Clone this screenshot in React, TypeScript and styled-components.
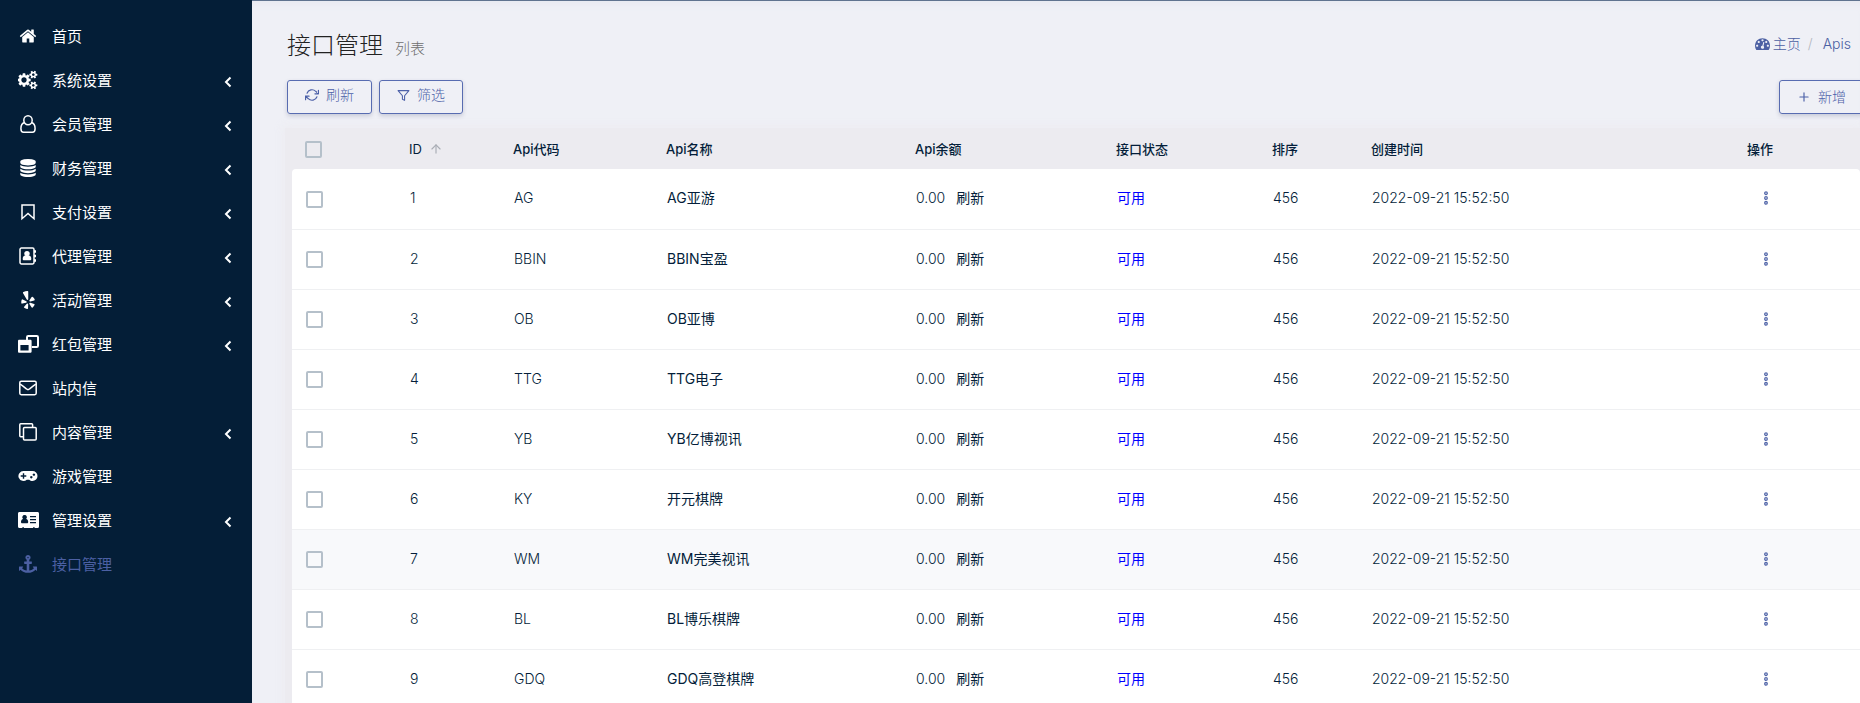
import React from "react";
import styled, { createGlobalStyle, css } from "styled-components";
import { FaYelp } from "react-icons/fa";
import { FiArrowUp, FiFilter, FiPlus } from "react-icons/fi";

const GlobalStyle = createGlobalStyle`
  *, *::before, *::after { box-sizing: border-box; }
  body {
    margin: 0;
    background: #eff0f6;
    color: #041e3a;
    font-family: Inter, "Noto Sans CJK SC", sans-serif;
    font-size: 14px;
    font-weight: 300;
    line-height: 20px;
  }
  a { color: inherit; text-decoration: none; }
  button { font: inherit; color: inherit; cursor: pointer; }
`;

const Shell = styled.div`
  display: flex;
  height: 100vh;
  overflow: hidden;
`;

const Sidebar = styled.nav`
  flex: none;
  width: 252px;
  padding-top: 14px;
  background: #041e37;
`;

const Menu = styled.ul`
  margin: 0;
  padding: 0;
  list-style: none;
`;

const MenuLink = styled.a<{ $active?: boolean }>`
  display: flex;
  align-items: center;
  height: 44px;
  padding: 0 20px 0 16px;
  color: ${(p) => (p.$active ? "#4c60a3" : "#ffffff")};
  font-size: 15px;
  font-weight: 400;
`;

const MenuIcon = styled.span`
  display: flex;
  justify-content: center;
  width: 24px;
  margin-right: 12px;
`;

const MenuLabel = styled.span`
  flex: 1;
  padding-top: 1px;
`;

const Chevron = styled.svg`
  width: 8px;
  height: 12px;
  margin-top: 4px;
  fill: none;
  stroke: currentColor;
  stroke-width: 2;
`;

const Main = styled.main`
  flex: 1;
  min-width: 0;
  padding-left: 33px;
  border-top: 1px solid #60738f;
  box-shadow: inset 0 8px 8px -6px #e6e7ef;
`;

const PageHeader = styled.header`
  display: flex;
  align-items: center;
  justify-content: space-between;
  height: 79px;
  padding: 14px 9px 0 2px;
`;

const Title = styled.h1`
  margin: 0;
  color: #222222;
  font-size: 24px;
  font-weight: 300;
  line-height: 32px;
`;

const Subtitle = styled.small`
  margin-left: 12px;
  color: #6e6e6e;
  font-size: 15px;
`;

const Breadcrumb = styled.nav`
  display: flex;
  align-items: center;
  gap: 7px;
  padding-bottom: 8px;
  color: #4c60a3;
`;

const CrumbLink = styled.a`
  display: flex;
  align-items: center;
  gap: 3px;
`;

const Slash = styled.span`
  margin-right: 3px;
  color: #b3b7c0;
`;

const Toolbar = styled.div`
  display: flex;
  gap: 7px;
  margin: 0 -4px 14px 2px;
`;

const ToolButton = styled.button<{ $end?: boolean }>`
  display: flex;
  align-items: center;
  gap: 7px;
  height: 34px;
  padding: 0 17px ${(p) => (p.$end ? 0 : 4)}px;
  border: 1px solid #586cb1;
  border-radius: 3px;
  background: transparent;
  box-shadow: 0 2px 4px rgba(60, 70, 110, 0.22);
  color: #4c60a8;
  ${(p) => p.$end && css`margin-left: auto;`}
`;

const TableCard = styled.div`
  padding-left: 7px;
  background: #ecebf0;
  box-shadow: 0 0 8px 2px rgba(236, 235, 240, 0.8);
`;

const Table = styled.table`
  width: 100%;
  border-collapse: separate;
  border-spacing: 0;
  table-layout: fixed;
  text-align: left;
`;

const Col = styled.col<{ $width?: number }>`
  width: ${(p) => (p.$width ? `${p.$width}px` : "auto")};
`;

const HeadCell = styled.th<{ $latin?: boolean }>`
  height: 41px;
  padding: 0 13px;
  font-size: 13px;
  font-weight: ${(p) => (p.$latin ? 400 : 500)};
  white-space: nowrap;
`;

const SortLabel = styled.span`
  display: flex;
  align-items: center;
  gap: 7px;

  svg { color: #a9adb5; }
`;

const Cell = styled.td<{ $strong?: boolean }>`
  height: 60px;
  padding: 0 14px 2px;
  border-bottom: 1px solid #eff0f2;
  font-weight: ${(p) => (p.$strong ? 400 : 300)};
  white-space: nowrap;
`;

const Row = styled.tr<{ $hover?: boolean }>`
  ${Cell} { background: ${(p) => (p.$hover ? "#f8f9fb" : "#ffffff")}; }

  &:first-child ${Cell} { height: 61px; }
  &:first-child ${Cell}:first-child { border-top-left-radius: 4px; }
  &:first-child ${Cell}:last-child { border-top-right-radius: 4px; }
`;

const Check = styled.input`
  display: block;
  appearance: none;
  width: 17px;
  height: 17px;
  margin: 2px 0 0;
  border: 2px solid #b5c0ca;
  border-radius: 2px;
  background: transparent;

  &:checked { background: #b5c0ca; }
`;

const RefreshLink = styled.a`
  margin-left: 11px;
  font-weight: 400;
`;

const Status = styled.span`
  color: #0000ff;
`;

const MoreButton = styled.button`
  display: flex;
  align-items: center;
  justify-content: center;
  width: 12px;
  height: 20px;
  margin-left: 12px;
  padding: 0;
  border: 0;
  background: transparent;
  color: #5468aa;
`;

const Fa = ({ d, size = 18, box = 1792 }: { d: string; size?: number; box?: number }) => (
  <svg width={size} height={size} viewBox={`0 0 ${box} 1792`} fill="currentColor" aria-hidden="true">
    <path d={d} />
  </svg>
);

const HOME =
  "M1472 992v480q0 26-19 45t-45 19h-384v-384h-256v384h-384q-26 0-45-19t-19-45v-480q0-1 .5-3t.5-3l575-474 575 474q1 2 1 6zm223-69l-62 74q-8 9-21 11h-3q-13 0-21-7l-692-577-692 577q-12 8-24 7-13-2-21-11l-62-74q-8-10-7-23.5t11-21.5l719-599q32-26 76-26t76 26l244 204v-195q0-14 9-23t23-9h192q14 0 23 9t9 23v408l219 182q10 8 11 21.5t-7 23.5z";

const SMALL_COG =
  "v140q0 16-149 31-12 27-30 52 51 113 51 138 0 4-4 7-122 71-124 71-8 0-46-47t-52-68q-20 2-30 2t-30-2q-14 21-52 68t-46 47q-2 0-124-71-4-3-4-7 0-25 51-138-18-25-30-52-149-15-149-31v-140q0-16 149-31 13-29 30-52-51-113-51-138 0-4 4-7 4-2 35-20t59-34 30-16q8 0 46 46.5t52 67.5q20-2 30-2t30 2q51-71 92-112l6-2q4 0 124 70 4 3 4 7 0 25-51 138 17 23 30 52 149 15 149 31z";

const COGS =
  "M832 896q0-106-75-181t-181-75-181 75-75 181 75 181 181 75 181-75 75-181zm768 512q0-52-38-90t-90-38-90 38-38 90q0 53 37.5 90.5t90.5 37.5 90.5-37.5 37.5-90.5zm0-1024q0-52-38-90t-90-38-90 38-38 90q0 53 37.5 90.5t90.5 37.5 90.5-37.5 37.5-90.5zm-384 421v185q0 10-7 19.5t-16 10.5l-155 24q-11 35-32 76 34 48 90 115 7 11 7 20 0 12-7 19-23 30-82.5 89.5t-78.5 59.5q-11 0-21-7l-115-90q-37 19-77 31-11 108-23 155-7 24-30 24h-186q-11 0-20-7.5t-10-17.5l-23-153q-34-10-75-31l-118 89q-7 7-20 7-11 0-21-8-144-133-144-160 0-9 7-19 10-14 41-53t47-61q-23-44-35-82l-152-24q-10-1-17-9.5t-7-19.5v-185q0-10 7-19.5t16-10.5l155-24q11-35 32-76-34-48-90-115-7-11-7-20 0-12 7-20 22-30 82-89t79-59q11 0 21 7l115 90q34-18 77-32 11-108 23-154 7-24 30-24h186q11 0 20 7.5t10 17.5l23 153q34 10 75 31l118-89q8-7 20-7 11 0 21 8 144 133 144 160 0 8-7 19-12 16-42 54t-45 60q23 48 34 82l152 23q10 2 17 10.5t7 19.5zm640 533" +
  SMALL_COG +
  "m0-1024" +
  SMALL_COG;

const DISC = "q237 0 443-43t325-127v170q0 69-103 128t-280 93.5-385 34.5-385-34.5-280-93.5-103-128v-170q119 84 325 127t443 43z";

const DATABASE =
  `M896 768${DISC}M896 1536${DISC}M896 1152${DISC}` +
  "M896 0q208 0 385 34.5t280 93.5 103 128v128q0 69-103 128t-280 93.5-385 34.5-385-34.5-280-93.5-103-128v-128q0-69 103-128t280-93.5 385-34.5z";

const DIAL_DOT = "q0-53-37.5-90.5t-90.5-37.5-90.5 37.5-37.5 90.5 37.5 90.5 90.5 37.5 90.5-37.5 37.5-90.5z";

const DASHBOARD =
  `M384 1152${DIAL_DOT}M576 704${DIAL_DOT}` +
  "M1004 1185l101-382q6-26-7.5-48.5t-38.5-29.5-48 6.5-30 39.5l-101 382q-60 5-107 43.5t-63 98.5q-20 77 20 146t117 89 146-20 89-117q16-60-6-117t-72-91z" +
  `M1664 1152${DIAL_DOT}M1024 512${DIAL_DOT}M1472 704${DIAL_DOT}` +
  "M1792 1152q0 261-141 483-19 29-54 29h-1402q-35 0-54-29-141-221-141-483 0-182 71-348t191-286 286-191 348-71 348 71 286 191 191 286 71 348z";

const ANCHOR =
  "M960 256q0-26-19-45t-45-19-45 19-19 45 19 45 45 19 45-19 19-45zm832 928v352q0 22-20 30-8 2-12 2-12 0-23-9l-93-93q-119 143-318.500 226.500t-429.500 83.500-429.500-83.500-318.500-226.500l-93 93q-9 9-23 9-4 0-12-2-20-8-20-30v-352q0-14 9-23t23-9h352q22 0 30 20 8 19-7 35l-100 100q67 91 189.500 153.500t271.500 82.500v-647h-192q-26 0-45-19t-19-45v-128q0-26 19-45t45-19h192v-163q-58-34-93-92.500t-35-128.500q0-106 75-181t181-75 181 75 75 181q0 70-35 128.500t-93 92.500v163h192q26 0 45 19t19 45v128q0 26-19 45t-45 19h-192v647q149-20 271.500-82.500t189.500-153.500l-100-100q-15-16-7-35 8-20 30-20h352q14 0 23 9t9 23z";

const Outline = ({ w = 20, children }: { w?: number; children: React.ReactNode }) => (
  <svg width={w} height={18} viewBox={`0 0 ${w} 18`} fill="none" stroke="currentColor" strokeWidth={1.5} aria-hidden="true">
    {children}
  </svg>
);

const UserIcon = () => (
  <Outline w={16}>
    <ellipse cx="8" cy="5.300" rx="4.200" ry="4.500" />
    <path d="M4.600 7.600C2.200 8.200.9 10.600.9 13.700c0 2.100 1.100 3.500 2.700 3.500h8.800c1.600 0 2.700-1.400 2.700-3.500 0-3.100-1.300-5.500-3.700-6.100" />
  </Outline>
);

const BookmarkIcon = () => (
  <Outline w={14}>
    <path d="M1 2.100h12v13.600l-6-5.300-6 5.300z" />
  </Outline>
);

const AddressBookIcon = () => (
  <Outline w={18}>
    <rect x="1" y="1" width="14" height="16" rx="1.400" />
    <path d="M16 3.200v2.600M16 7.700v2.600M16 12.200v2.600" strokeWidth="2" />
    <circle cx="8" cy="6.600" r="2.700" fill="currentColor" stroke="none" />
    <path d="M3.700 11.900c0-2.200 1-3.300 2.400-3.500h3.800c1.400.2 2.400 1.300 2.400 3.500 0 .8-.5 1.300-1.200 1.300H4.900c-.7 0-1.200-.5-1.200-1.300z" fill="currentColor" stroke="none" />
  </Outline>
);

const WindowsIcon = () => (
  <Outline w={21}>
    <path d="M9 5V2.200c0-.8.4-1.200 1.200-1.200h8.600c.8 0 1.200.4 1.200 1.200v8.600c0 .8-.4 1.200-1.200 1.200h-5" strokeWidth="2" />
    <path d="M0 6.200c0-.9.5-1.400 1.400-1.400h10.800c.9 0 1.400.5 1.400 1.400v10.200c0 .9-.5 1.400-1.400 1.400H1.400c-.9 0-1.400-.5-1.400-1.400zM2.400 10v5.500h8.200V10z" fill="currentColor" fillRule="evenodd" stroke="none" />
  </Outline>
);

const EnvelopeIcon = () => (
  <Outline w={18}>
    <rect x=".8" y="2.300" width="16.400" height="13.400" rx="1.400" />
    <path d="M1.200 5.200c2.100 1.300 4.600 3.400 6.300 4.800 1.100.9 1.900.9 3 0 1.700-1.400 4.200-3.500 6.300-4.800" />
  </Outline>
);

const CloneIcon = () => (
  <Outline w={18}>
    <path d="M4 13.700H1.700c-.6 0-.9-.3-.9-.9V1.700c0-.6.3-.9.9-.9h11c.6 0 .9.3.9.9V4" />
    <rect x="4.500" y="4.400" width="12.700" height="12.700" rx="1" />
  </Outline>
);

const GamepadIcon = () => (
  <svg width={20} height={12} viewBox="0 0 20 12" fill="currentColor" fillRule="evenodd" aria-hidden="true">
    <path d="M5.500 1h9a5 5 0 0 1 0 10c-1.300 0-2.400-.5-3.300-1.300H8.800A5 5 0 1 1 5.500 1zM4.800 3.200v2.100H2.700v1.400h2.100v2.100h1.400V6.700h2.100V5.300H6.200V3.200zM13.300 6a1.200 1.200 0 1 0 .01 0zM15.900 3.400a1.200 1.200 0 1 0 .01 0z" />
  </svg>
);

const CardIcon = () => (
  <svg width={21} height={16} viewBox="0 0 21 16" fill="currentColor" fillRule="evenodd" aria-hidden="true">
    <path d="M1.500 0h18c.9 0 1.500.6 1.500 1.500v13c0 .7-.4 1.200-1 1.400h-3.500v-1h-1.200v1H5.700v-1H4.500v1H1c-.6-.2-1-.7-1-1.400v-13C0 .6.600 0 1.500 0zM6.600 3a2.200 2.200 0 0 0-1.500 3.900C3.700 7.100 3 8.500 3 10c0 .8.500 1.300 1.200 1.300H9c.7 0 1.200-.5 1.200-1.300 0-1.500-.7-2.900-2.100-3.100A2.200 2.200 0 0 0 6.600 3zM12 4v1.200h6V4zM12 7v1.200h6V7zM12 10v1.200h6V10z" />
  </svg>
);

const RefreshIcon = () => (
  <svg width={14} height={14} viewBox="0 0 24 24" fill="none" stroke="currentColor" strokeWidth={2} strokeLinecap="round" strokeLinejoin="round" aria-hidden="true">
    <path d="M23 4v6h-6M1 20v-6h6M3.510 9a9 9 0 0 1 14.850-3.360L23 10M1 14l4.640 4.360A9 9 0 0 0 20.490 15" />
  </svg>
);

const MoreIcon = () => (
  <svg width={6} height={14} viewBox="0 0 6 14" fill="none" stroke="currentColor" strokeWidth={1.300} aria-hidden="true">
    <circle cx="3" cy="2.200" r="1.300" />
    <circle cx="3" cy="7" r="1.300" />
    <circle cx="3" cy="11.800" r="1.300" />
  </svg>
);

type MenuEntry = { label: string; icon: React.ReactNode; children?: boolean; active?: boolean };

const MENU: MenuEntry[] = [
  { label: "首页", icon: <Fa d={HOME} /> },
  { label: "系统设置", icon: <Fa d={COGS} size={20} box={1920} />, children: true },
  { label: "会员管理", icon: <UserIcon />, children: true },
  { label: "财务管理", icon: <Fa d={DATABASE} />, children: true },
  { label: "支付设置", icon: <BookmarkIcon />, children: true },
  { label: "代理管理", icon: <AddressBookIcon />, children: true },
  { label: "活动管理", icon: <FaYelp size={18} />, children: true },
  { label: "红包管理", icon: <WindowsIcon />, children: true },
  { label: "站内信", icon: <EnvelopeIcon /> },
  { label: "内容管理", icon: <CloneIcon />, children: true },
  { label: "游戏管理", icon: <GamepadIcon /> },
  { label: "管理设置", icon: <CardIcon />, children: true },
  { label: "接口管理", icon: <Fa d={ANCHOR} />, active: true },
];

const APIS = [
  ["AG", "AG亚游"],
  ["BBIN", "BBIN宝盈"],
  ["OB", "OB亚博"],
  ["TTG", "TTG电子"],
  ["YB", "YB亿博视讯"],
  ["KY", "开元棋牌"],
  ["WM", "WM完美视讯"],
  ["BL", "BL博乐棋牌"],
  ["GDQ", "GDQ高登棋牌"],
];

export default function App() {
  return (
    <>
      <GlobalStyle />
      <Shell>
        <Sidebar>
          <Menu>
            {MENU.map((item) => (
              <li key={item.label}>
                <MenuLink href="#" $active={item.active}>
                  <MenuIcon>{item.icon}</MenuIcon>
                  <MenuLabel>{item.label}</MenuLabel>
                  {item.children && (
                    <Chevron viewBox="0 0 8 12" aria-hidden="true">
                      <path d="M6.500 1.500 2 6l4.500 4.500" />
                    </Chevron>
                  )}
                </MenuLink>
              </li>
            ))}
          </Menu>
        </Sidebar>
        <Main>
          <PageHeader>
            <Title>
              接口管理
              <Subtitle>列表</Subtitle>
            </Title>
            <Breadcrumb>
              <CrumbLink href="#">
                <Fa d={DASHBOARD} size={15} />
                主页
              </CrumbLink>
              <Slash>/</Slash>
              <span>Apis</span>
            </Breadcrumb>
          </PageHeader>
          <Toolbar>
            <ToolButton type="button">
              <RefreshIcon />
              刷新
            </ToolButton>
            <ToolButton type="button">
              <FiFilter size={13} />
              筛选
            </ToolButton>
            <ToolButton type="button" $end>
              <FiPlus size={14} />
              新增
            </ToolButton>
          </Toolbar>
          <TableCard>
            <Table>
              <colgroup>
                <Col $width={104} />
                <Col $width={104} />
                <Col $width={153} />
                <Col $width={249} />
                <Col $width={201} />
                <Col $width={156} />
                <Col $width={99} />
                <Col />
                <Col $width={126} />
              </colgroup>
              <thead>
                <tr>
                  <HeadCell>
                    <Check type="checkbox" aria-label="全选" />
                  </HeadCell>
                  <HeadCell $latin>
                    <SortLabel>
                      ID <FiArrowUp size={14} />
                    </SortLabel>
                  </HeadCell>
                  <HeadCell>Api代码</HeadCell>
                  <HeadCell>Api名称</HeadCell>
                  <HeadCell>Api余额</HeadCell>
                  <HeadCell>接口状态</HeadCell>
                  <HeadCell>排序</HeadCell>
                  <HeadCell>创建时间</HeadCell>
                  <HeadCell>操作</HeadCell>
                </tr>
              </thead>
              <tbody>
                {APIS.map(([code, name], i) => (
                  <Row key={code} $hover={code === "WM"}>
                    <Cell>
                      <Check type="checkbox" aria-label={name} />
                    </Cell>
                    <Cell>{i + 1}</Cell>
                    <Cell>{code}</Cell>
                    <Cell $strong>{name}</Cell>
                    <Cell>
                      0.00<RefreshLink href="#">刷新</RefreshLink>
                    </Cell>
                    <Cell $strong>
                      <Status>可用</Status>
                    </Cell>
                    <Cell>456</Cell>
                    <Cell>2022-09-21 15:52:50</Cell>
                    <Cell>
                      <MoreButton type="button" aria-label="更多">
                        <MoreIcon />
                      </MoreButton>
                    </Cell>
                  </Row>
                ))}
              </tbody>
            </Table>
          </TableCard>
        </Main>
      </Shell>
    </>
  );
}
